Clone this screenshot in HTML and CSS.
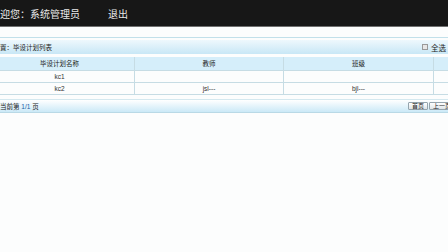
FILE: index.html
```html
<!DOCTYPE html>
<html lang="zh-CN">
  <head>
    <title>毕设计划列表</title>
    <meta charset="utf-8" />
    <link rel="stylesheet" href="styles.css">
  </head>
  <body>
    <div class="page">
      <div class="top">
        <span class="welcome">迎您：系统管理员</span>
        <a class="logout">退出</a>
      </div>
      <div class="main">
        <div class="panel">
          <div class="title">
            <span class="where">置：毕设计划列表</span>
            <label class="all"><span class="box"></span>全选</label>
          </div>
          <table class="list">
            <tr class="head">
              <th class="c1">毕设计划名称</th>
              <th class="c2">教师</th>
              <th class="c3">班级</th>
              <th></th>
            </tr>
            <tr>
              <td>kc1</td>
              <td></td>
              <td></td>
              <td></td>
            </tr>
            <tr>
              <td>kc2</td>
              <td>jsl---</td>
              <td>bjl---</td>
              <td></td>
            </tr>
          </table>
          <div class="pager">
            <span class="count">当前第 <b>1/1</b> 页</span>
            <span class="btns">
              <button>首页</button>
              <button>上一页</button>
            </span>
          </div>
        </div>
      </div>
    </div>
  </body>
</html>
```

FILE: styles.css
```css
* {
  margin: 0;
  padding: 0;
  box-sizing: border-box;
}

body {
  background-color: #fcfdfd;
  overflow: hidden;
  font-family: "Liberation Sans", "Noto Sans CJK SC", sans-serif;
  color: #333;
}

.page {
  margin-left: -16px;
  width: 520px;
}

.top {
  height: 27px;
  background-color: #171717;
  border-bottom: 1px solid #707070;
  display: flex;
  align-items: center;
  padding-left: 16px;
  color: #e8e8e8;
  font-size: 10px;
}

.logout {
  margin-left: 28px;
}

.main {
  padding-top: 10px;
}

.panel {
  border-top: 1px solid #c2e0ea;
  padding-top: 2px;
}

.title {
  height: 14px;
  display: flex;
  align-items: center;
  padding-left: 16px;
  padding-right: 58px;
  background: linear-gradient(#eef8fd, #c8e7f6);
  font-size: 6.5px;
  color: #222;
}

.all {
  margin-left: auto;
  display: flex;
  align-items: center;
  font-size: 7.5px;
}

.box {
  width: 6px;
  height: 6px;
  border: 1px solid #999;
  background-color: #e6e6e6;
  margin-right: 3px;
}

.list {
  margin-top: 3px;
  width: 100%;
  border-collapse: collapse;
  font-size: 6.5px;
}

.list th,
.list td {
  border: 1px solid #c6dce4;
  text-align: center;
  font-weight: normal;
  height: 12px;
  padding: 0;
}

.list tr:first-child th {
  border-top: none;
}

.head th {
  height: 13px;
  background-color: #d5eefa;
  color: #222;
}

.c1 {
  width: 150px;
}

.c2 {
  width: 149px;
}

.c3 {
  width: 150px;
}

.pager {
  margin-top: 4px;
  height: 14px;
  display: flex;
  align-items: center;
  padding-left: 16px;
  padding-right: 49px;
  background: linear-gradient(#ffffff, #cbe9f7);
  border-top: 1px solid #d4e8ef;
  border-bottom: 1px solid #b9d9e6;
  font-size: 6.5px;
  color: #222;
}

.count b {
  font-weight: normal;
  color: #1d5fa6;
}

.btns {
  margin-left: auto;
  display: flex;
  gap: 1px;
}

.btns button {
  height: 8px;
  padding: 0 3px;
  font-family: "Liberation Sans", "Noto Sans CJK SC", sans-serif;
  font-size: 6px;
  line-height: 6px;
  color: #222;
  border: 1px solid #95a4ad;
  border-radius: 1px;
  background: linear-gradient(#ffffff, #dde3e7);
}
```
